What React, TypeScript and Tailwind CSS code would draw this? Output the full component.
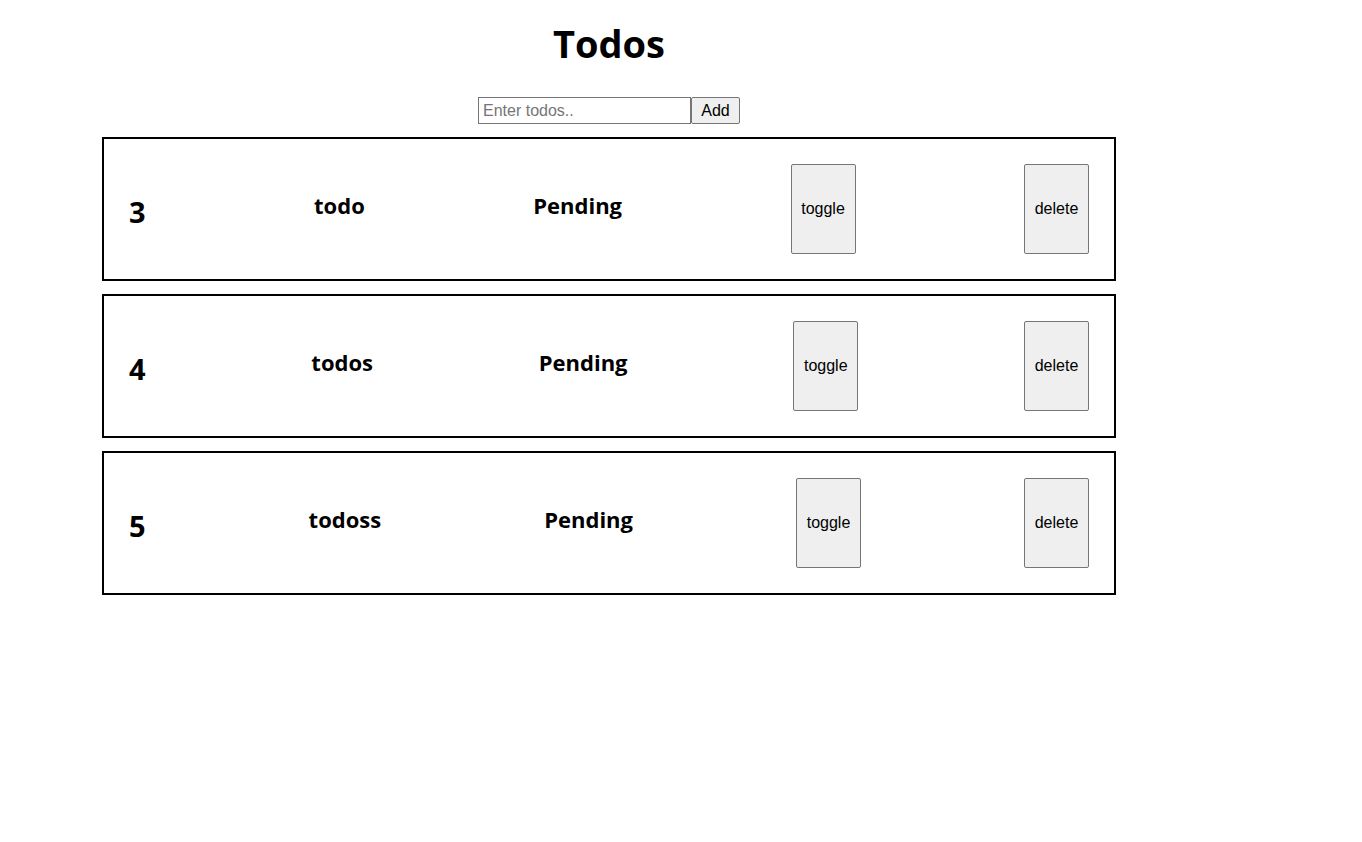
import React, { useState } from "react";

interface Todo {
  id: number;
  title: string;
  done: boolean;
}

const initialTodos: Todo[] = [
  { id: 3, title: "todo", done: false },
  { id: 4, title: "todos", done: false },
  { id: 5, title: "todoss", done: false },
];

const App: React.FC = () => {
  const [todos, setTodos] = useState<Todo[]>(initialTodos);
  const [text, setText] = useState<string>("");

  const addTodo = () => {
    if (!text.trim()) return;
    const nextId = todos.length ? todos[todos.length - 1].id + 1 : 1;
    setTodos([...todos, { id: nextId, title: text, done: false }]);
    setText("");
  };

  return (
    <div className="min-h-screen bg-white text-black font-['Open_Sans','Noto_Sans',sans-serif]">
      <div className="ml-[102px] w-[1014px] flex flex-col items-center">
        <h1 className="text-[38px] font-bold leading-[52px] mt-[17px]">Todos</h1>

        {/* input row */}
        <div className="flex mt-[28px] mb-[13px] font-['Liberation_Sans',Arial,sans-serif]">
          <input
            type="text"
            placeholder="Enter todos.."
            value={text}
            onChange={(e) => setText(e.target.value)}
            className="w-[213px] h-[27px] border border-[#767676] px-[4px] text-[16px] placeholder:text-[#757575] outline-none"
          />
          <button
            onClick={addTodo}
            className="w-[49px] h-[27px] border border-[#767676] rounded-[2px] bg-[#efefef] text-[16px]"
          >
            Add
          </button>
        </div>

        {/* todo list */}
        <div className="w-full flex flex-col gap-[13px]">
          {todos.map((todo) => (
            <div
              key={todo.id}
              className="h-[144px] border-2 border-black flex items-center justify-between px-[25px]"
            >
              <h2 className="text-[29px] font-bold leading-[40px] mt-[5px]">{todo.id}</h2>
              <h3 className="text-[22px] font-bold leading-[30px] -mt-[8px]">{todo.title}</h3>
              <h3 className="text-[22px] font-bold leading-[30px] -mt-[8px]">
                {todo.done ? "Done" : "Pending"}
              </h3>
              <button
                onClick={() =>
                  setTodos(todos.map((t) => (t.id === todo.id ? { ...t, done: !t.done } : t)))
                }
                className="w-[65px] h-[90px] border border-[#767676] rounded-[2px] bg-[#efefef] text-[16px] font-['Liberation_Sans',Arial,sans-serif]"
              >
                toggle
              </button>
              <button
                onClick={() => setTodos(todos.filter((t) => t.id !== todo.id))}
                className="w-[65px] h-[90px] border border-[#767676] rounded-[2px] bg-[#efefef] text-[16px] font-['Liberation_Sans',Arial,sans-serif]"
              >
                delete
              </button>
            </div>
          ))}
        </div>
      </div>
    </div>
  );
};

export default App;
